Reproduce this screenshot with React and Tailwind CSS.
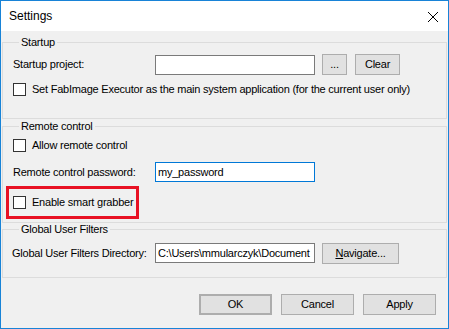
import React from "react";

function CheckBox() {
  return <span className="block h-[13px] w-[13px] shrink-0 border border-[#333333] bg-white" />;
}

function Group({ title, className, children }) {
  return (
    <fieldset className={"border border-[#dcdcdc] pl-[10px] pr-[10px] " + className}>
      <legend className="ml-[6px] px-[2px] text-[11px] leading-[13px] text-black">{title}</legend>
      {children}
    </fieldset>
  );
}

const btn =
  "flex h-[21px] shrink-0 items-center justify-center border border-[#adadad] bg-[#e1e1e1] text-[11px] text-black";
const field =
  "h-[20px] w-[160px] shrink-0 border bg-white px-[2px] text-[11px] leading-[18px] text-black";

function App() {
  return (
    <div
      className="flex h-[329px] w-[449px] flex-col border border-[#1883d7] bg-[#f0f0f0] text-[11px] tracking-[-0.22px] text-black"
      style={{ fontFamily: '"Liberation Sans", Arial, sans-serif' }}
    >
      <div className="flex h-[30px] shrink-0 items-center justify-between bg-white pl-[8px] pr-[9px]">
        <span className="text-[12px] tracking-normal">Settings</span>
        <svg width="12" height="12" viewBox="0 0 12 12" className="mt-[1px]">
          <path d="M1 1 L11 11 M11 1 L1 11" stroke="#000" strokeWidth="1" />
        </svg>
      </div>

      <div className="flex flex-col pl-[1px] pr-[1px]">
        <Group title="Startup" className="mt-[5px] pb-[22px]">
          <div className="mt-[5px] flex h-[21px] items-center">
            <span className="w-[142px] shrink-0">Startup project:</span>
            <div className={field + " border-[#7a7a7a]"} />
            <div className={btn + " ml-[7px] w-[25px]"}>...</div>
            <div className={btn + " ml-[8px] w-[45px]"}>Clear</div>
          </div>
          <div className="mt-[8px] flex h-[13px] items-center whitespace-nowrap">
            <CheckBox />
            <span className="ml-[6px]">
              Set FabImage Executor as the main system application (for the current user only)
            </span>
          </div>
        </Group>

        <Group title="Remote control" className="mt-[1px] pb-[3px]">
          <div className="mt-[6px] flex h-[13px] items-center">
            <CheckBox />
            <span className="ml-[6px]">Allow remote control</span>
          </div>
          <div className="mt-[10px] flex h-[20px] items-center">
            <span className="w-[142px] shrink-0">Remote control password:</span>
            <div className={field + " border-[#0078d7]"}>my_password</div>
          </div>
          <div className="ml-[-7px] mt-[4px] flex h-[33px] w-[133px] items-center whitespace-nowrap border-[3px] border-[#e81123] pl-[4px]">
            <CheckBox />
            <span className="ml-[6px]">Enable smart grabber</span>
          </div>
        </Group>

        <Group title="Global User Filters" className="pb-[14px]">
          <div className="mt-[7px] flex h-[20px] items-center">
            <span className="ml-[-1px] w-[143px] shrink-0 whitespace-nowrap">
              Global User Filters Directory:
            </span>
            <div className={field + " overflow-hidden whitespace-nowrap border-[#7a7a7a]"}>
              C:\Users\mmularczyk\Document
            </div>
            <div className={btn + " ml-[7px] w-[77px]"}>
              <span className="first-letter:underline">Navigate...</span>
            </div>
          </div>
        </Group>
      </div>

      <div className="mt-[16px] flex justify-end gap-[9px] pr-[12px]">
        <div className={btn + " w-[73px] border-2 border-[#0078d7]"}>OK</div>
        <div className={btn + " w-[73px]"}>Cancel</div>
        <div className={btn + " w-[73px]"}>Apply</div>
      </div>
    </div>
  );
}

export default App;
